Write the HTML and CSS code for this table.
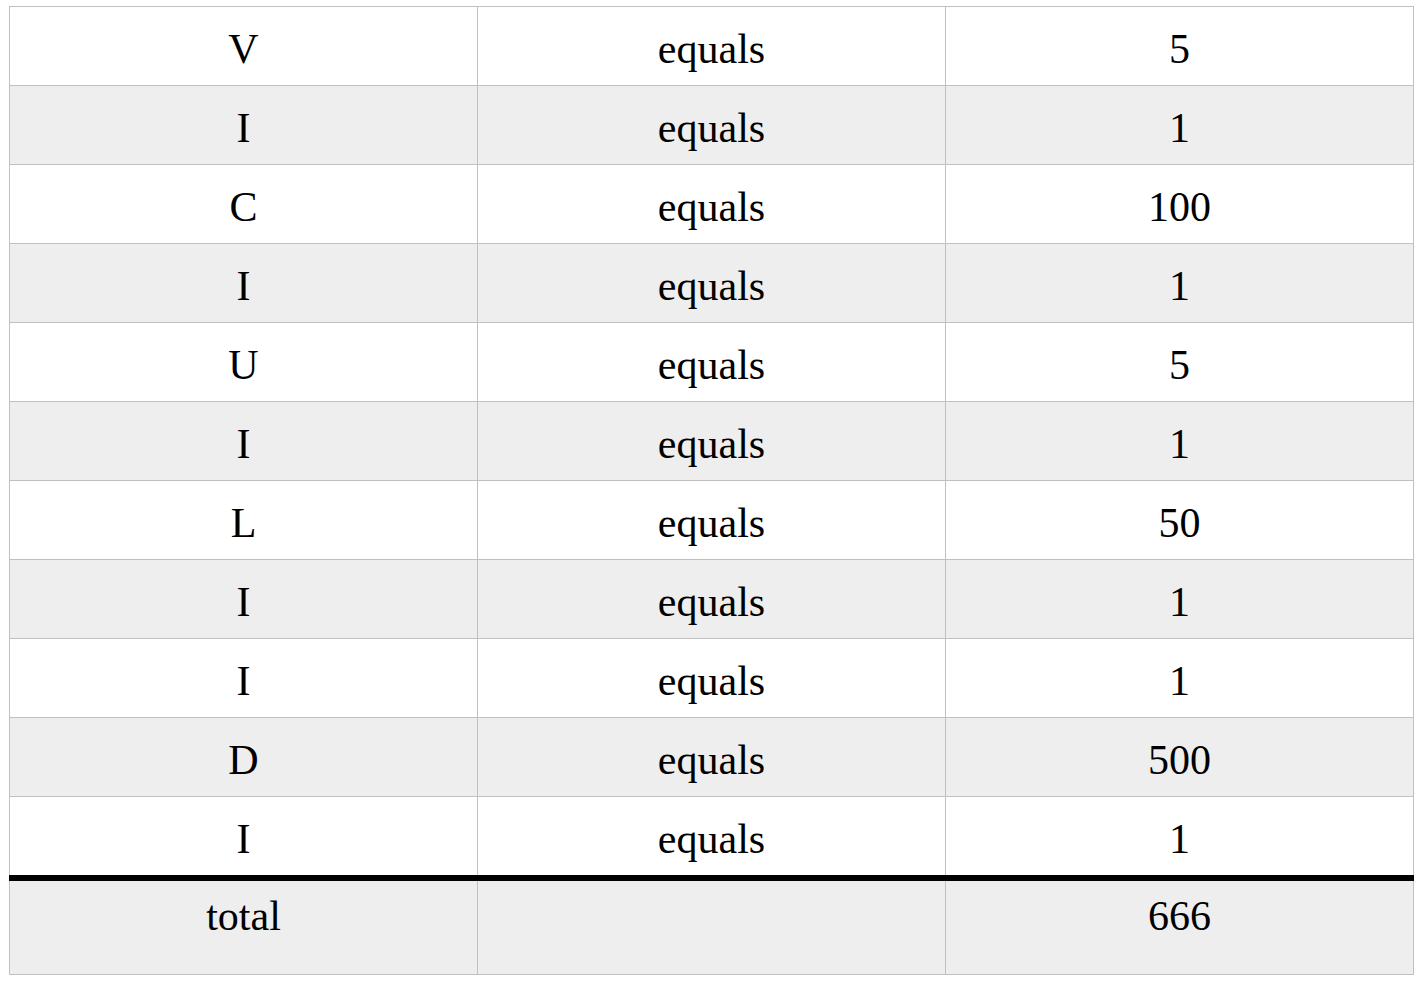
FILE: index.html
```html
<!DOCTYPE html>
<html>
<head>
<meta charset="utf-8">
<link rel="stylesheet" href="styles.css">
</head>
<body>
<table class="tally">
  <tbody>
    <tr><td>V</td><td>equals</td><td>5</td></tr>
    <tr><td>I</td><td>equals</td><td>1</td></tr>
    <tr><td>C</td><td>equals</td><td>100</td></tr>
    <tr><td>I</td><td>equals</td><td>1</td></tr>
    <tr><td>U</td><td>equals</td><td>5</td></tr>
    <tr><td>I</td><td>equals</td><td>1</td></tr>
    <tr><td>L</td><td>equals</td><td>50</td></tr>
    <tr><td>I</td><td>equals</td><td>1</td></tr>
    <tr><td>I</td><td>equals</td><td>1</td></tr>
    <tr><td>D</td><td>equals</td><td>500</td></tr>
    <tr><td>I</td><td>equals</td><td>1</td></tr>
  </tbody>
  <tfoot>
    <tr class="total"><td>total</td><td></td><td>666</td></tr>
  </tfoot>
</table>
</body>
</html>
```

FILE: styles.css
```css
html, body {
  background: #ffffff;
}
body {
  margin: 6px 0 0 9px;
  font-family: "Liberation Serif", "Times New Roman", serif;
  color: #000;
}
.tally {
  border-collapse: collapse;
  width: 1405px;
  table-layout: fixed;
}
.tally td {
  border: 1px solid #c0c0c0;
  text-align: center;
  font-size: 42px;
  line-height: 72px;
  height: 72px;
  padding: 6px 0 0 0;
  vertical-align: top;
}
.tally tbody tr:nth-child(even) td {
  background: #eeeeee;
}
.tally tr.total td {
  background: #eeeeee;
  border-top: 6px solid #000;
  line-height: 66px;
  height: 66px;
  padding: 2px 0 25px 0;
}
```
